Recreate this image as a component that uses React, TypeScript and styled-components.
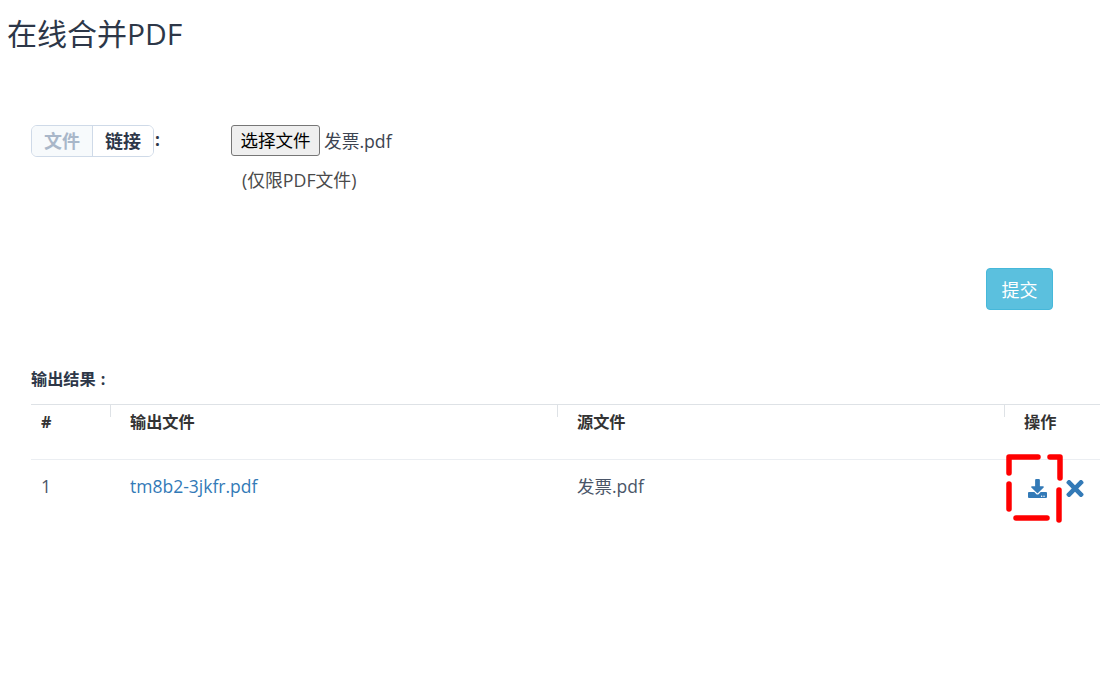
import React from 'react';
import styled, { createGlobalStyle } from 'styled-components';
import { FaDownload, FaTimes } from 'react-icons/fa';

const FONT = `"Open Sans", "Noto Sans CJK SC", sans-serif`;

const COLUMNS = '79px 447px 447px 1fr';

const App = () => {
  return (
    <S.Page>
      <S.GlobalStyle />
      <S.Title>在线合并PDF</S.Title>

      <S.FormRow>
        <S.SourceLabel>
          <S.Segment>
            <S.SegmentItem $active>文件</S.SegmentItem>
            <S.SegmentItem>链接</S.SegmentItem>
          </S.Segment>
          <S.Colon>:</S.Colon>
        </S.SourceLabel>
        <S.FileColumn>
          <S.FileField>
            <S.FileButton type="button">选择文件</S.FileButton>
            <S.FileName>发票.pdf</S.FileName>
          </S.FileField>
          <S.Hint>(仅限PDF文件)</S.Hint>
        </S.FileColumn>
      </S.FormRow>

      <S.SubmitRow>
        <S.SubmitButton type="button">提交</S.SubmitButton>
      </S.SubmitRow>

      <S.ResultTitle>
        输出结果<S.ResultColon>:</S.ResultColon>
      </S.ResultTitle>

      <S.Table>
        <S.HeadRow>
          <S.HeadCell>#</S.HeadCell>
          <S.HeadCell $divided>输出文件</S.HeadCell>
          <S.HeadCell $divided>源文件</S.HeadCell>
          <S.HeadCell $divided>操作</S.HeadCell>
        </S.HeadRow>
        <S.BodyRow>
          <S.Cell>1</S.Cell>
          <S.Cell><S.FileLink href="#">tm8b2-3jkfr.pdf</S.FileLink></S.Cell>
          <S.Cell>发票.pdf</S.Cell>
          <S.ActionCell>
            <S.DownloadIcon />
            <S.RemoveIcon />
            <S.Annotation viewBox="0 0 64 76" fill="none">
              <path d="M4 20V4H33" />
              <path d="M45 4H55V25" />
              <path d="M54 37V67" />
              <path d="M11 65H42" />
              <path d="M4 31V56" />
            </S.Annotation>
          </S.ActionCell>
        </S.BodyRow>
      </S.Table>
    </S.Page>
  );
};

export default App;

const S = {
  GlobalStyle: createGlobalStyle`
    body {
      margin: 0;
      background: #fff;
      font-family: ${FONT};
    }
  `,

  Page: styled.div`
    width: 1100px;
    height: 700px;
    overflow: hidden;
    color: #2d3748;
  `,

  Title: styled.h1`
    margin: 0;
    padding: 13px 0 0 7px;
    font-size: 30px;
    font-weight: 400;
    line-height: 41px;
    color: #2d3748;
  `,

  FormRow: styled.div`
    display: flex;
    margin-top: 71px;
    padding-left: 31px;
  `,

  SourceLabel: styled.div`
    display: flex;
    align-items: flex-start;
    width: 200px;
  `,

  Segment: styled.div`
    display: flex;
    height: 32px;
    border: 1px solid #cfdae8;
    border-radius: 6px;
    box-sizing: border-box;
    overflow: hidden;
  `,

  SegmentItem: styled.div<{ $active?: boolean }>`
    display: flex;
    align-items: center;
    justify-content: center;
    width: ${p => (p.$active ? '61px' : '60px')};
    padding-bottom: 2px;
    box-sizing: border-box;
    font-size: 18px;
    font-weight: 700;
    color: ${p => (p.$active ? '#a9b7c9' : '#2d3748')};
    background: ${p => (p.$active ? '#f7fafc' : '#fff')};
    border-right: ${p => (p.$active ? '1px solid #cfdae8' : 'none')};
  `,

  Colon: styled.span`
    margin-left: 1px;
    font-size: 17px;
    font-weight: 700;
    line-height: 30px;
  `,

  FileColumn: styled.div`
    display: flex;
    flex-direction: column;
  `,

  FileField: styled.div`
    display: flex;
    align-items: center;
    gap: 4px;
    width: 340px;
    height: 31px;
  `,

  FileButton: styled.button`
    width: 89px;
    height: 31px;
    padding: 0 0 2px;
    border: 1px solid #767676;
    border-radius: 3px;
    background: #efefef;
    color: #000;
    font-family: ${FONT};
    font-size: 17.5px;
  `,

  FileName: styled.span`
    margin-top: -2px;
    font-size: 17.7px;
    color: #3d4451;
  `,

  Hint: styled.div`
    margin-top: 12px;
    padding-left: 11px;
    font-size: 17.8px;
    line-height: 24px;
    color: #4a4a4a;
  `,

  SubmitRow: styled.div`
    display: flex;
    justify-content: flex-end;
    margin-top: 76px;
    padding-right: 47px;
  `,

  SubmitButton: styled.button`
    width: 67px;
    height: 42px;
    padding: 0;
    border: 1px solid #46b8da;
    border-radius: 4px;
    background: #5bc0de;
    color: #fff;
    font-family: ${FONT};
    font-size: 18px;
  `,

  ResultTitle: styled.div`
    margin-top: 58px;
    padding-left: 31px;
    font-size: 16.2px;
    font-weight: 700;
    line-height: 22px;
    color: #2d3748;
  `,

  ResultColon: styled.span`
    margin-left: 5px;
  `,

  Table: styled.div`
    margin: 14px 0 0 31px;
  `,

  HeadRow: styled.div`
    display: grid;
    grid-template-columns: ${COLUMNS};
    height: 56px;
    border-top: 1px solid #dee2e6;
    border-bottom: 1px solid #ebeef2;
    box-sizing: border-box;
  `,

  HeadCell: styled.div<{ $divided?: boolean }>`
    position: relative;
    padding: 6px 0 0 ${p => (p.$divided ? '20px' : '10px')};
    font-size: 16.2px;
    font-weight: 700;
    line-height: 22px;
    color: #333;

    &::before {
      content: '';
      display: ${p => (p.$divided ? 'block' : 'none')};
      position: absolute;
      left: 0;
      top: 0;
      width: 1px;
      height: 12px;
      background: #dee2e6;
    }
  `,

  BodyRow: styled.div`
    display: grid;
    grid-template-columns: ${COLUMNS};
    height: 54px;
  `,

  Cell: styled.div`
    padding: 14px 0 0 10px;
    font-size: 17.5px;
    line-height: 24px;
    color: #4a5568;

    & + & {
      padding-left: 20px;
    }
  `,

  FileLink: styled.a`
    color: #337ab7;
    text-decoration: none;
  `,

  ActionCell: styled.div`
    position: relative;
    display: flex;
    align-items: center;
    gap: 19px;
    height: 56px;
    padding-left: 24px;
  `,

  DownloadIcon: styled(FaDownload)`
    width: 19px;
    height: 19px;
    color: #337ab7;
  `,

  RemoveIcon: styled(FaTimes)`
    width: 18px;
    height: 25px;
    color: #337ab7;
  `,

  Annotation: styled.svg`
    position: absolute;
    left: 1px;
    top: -7px;
    width: 64px;
    height: 76px;
    stroke: #ff0000;
    stroke-width: 5.5;
    stroke-linecap: round;
    stroke-linejoin: round;
  `,
};
